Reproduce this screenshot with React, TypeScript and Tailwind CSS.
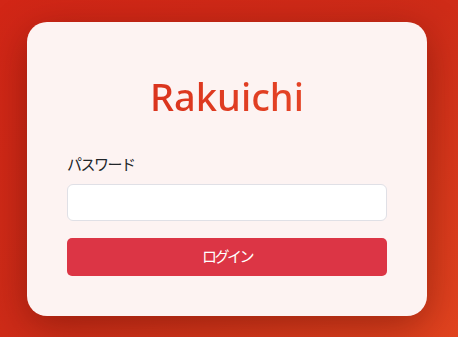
export default function App() {
  return (
    <div
      className="min-h-screen w-full flex items-center justify-center pr-1 bg-gradient-to-br from-[#d22616] via-[#cf2c18] to-[#e2441f]"
      style={{ fontFamily: '"Noto Sans", "Noto Sans CJK JP", sans-serif' }}
    >
      <div className="w-[400px] rounded-[20px] bg-[#fdf3f2] px-10 pt-10 pb-10 shadow-[0_10px_40px_rgba(80,10,0,0.45)]">
        <h1 className="mt-[10px] mb-[34px] text-center text-[38px] font-[550] leading-[48px] bg-gradient-to-r from-[#d42a18] to-[#ea4b2a] bg-clip-text text-transparent">
          Rakuichi
        </h1>
        <label className="block text-[15px] leading-[20px] tracking-[-1.5px] text-[#212529] mb-[10px]">
          パスワード
        </label>
        <input
          type="password"
          className="block w-full h-[37px] rounded-[6px] border border-[#e0e0e6] bg-white px-3 outline-none"
        />
        <button className="mt-[17px] w-full h-[38px] rounded-[5px] bg-[#dc3545] text-white text-[15px] tracking-[-2.5px]">
          ログイン
        </button>
      </div>
    </div>
  );
}
